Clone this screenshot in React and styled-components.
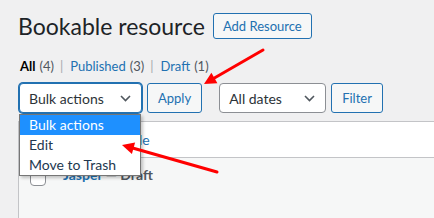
import React from "react";
import styled, { createGlobalStyle, css } from "styled-components";

const Global = createGlobalStyle`
  html, body { margin: 0; padding: 0; background: #f0f0f1; overflow: hidden; }
  body { font-family: Lato, "Noto Sans", sans-serif; color: #3c434a; }
  * { box-sizing: border-box; }
`;

const Page = styled.div`
  position: relative;
  width: 434px;
  height: 218px;
  overflow: hidden;
  padding: 13px 0 0 18px;
`;

const TitleRow = styled.div`
  display: flex;
  align-items: center;
  gap: 8px;
  height: 26px;
`;

const Title = styled.h1`
  margin: 0;
  font-size: 23px;
  font-weight: 400;
  line-height: 26px;
  color: #1d2327;
`;

const baseButton = css`
  background: #f6f7f7;
  border: 1px solid #2271b1;
  border-radius: 3px;
  color: #2271b1;
  font-family: inherit;
  font-size: 13px;
  cursor: pointer;
  display: inline-flex;
  align-items: center;
`;

const AddButton = styled.button`
  ${baseButton};
  height: 26px;
  padding: 0 9px;
`;

const Views = styled.ul`
  display: flex;
  list-style: none;
  margin: 18px 0 0 2px;
  padding: 0;
  font-size: 13px;
  line-height: 18px;
  color: #50575e;
`;

const ViewItem = styled.li`
  display: flex;
  gap: 4px;
  & + &::before {
    content: "|";
    color: #a7aaad;
    margin: 0 3px 0 6px;
  }
`;

const ViewLink = styled.a`
  color: ${(p) => (p.$current ? "#000" : "#2271b1")};
  font-weight: ${(p) => (p.$current ? 700 : 400)};
  text-decoration: none;
`;

const Toolbar = styled.div`
  display: flex;
  align-items: center;
  margin: 8px 0 0 1px;
  height: 30px;
`;

const ActionGroup = styled.div`
  display: flex;
  align-items: center;
  gap: 5px;
  margin-right: ${(p) => p.$gapAfter || 0}px;
`;

const SelectWrap = styled.div`
  position: relative;
`;

const SelectBox = styled.div`
  width: ${(p) => p.$width}px;
  height: 30px;
  display: flex;
  align-items: center;
  justify-content: space-between;
  padding: 0 10px 0 9px;
  background: #fff;
  border: 1px solid ${(p) => (p.$focused ? "#2271b1" : "#8c8f94")};
  box-shadow: ${(p) => (p.$focused ? "0 0 0 1px #2271b1" : "none")};
  border-radius: 4px;
  font-size: 14px;
  color: #2c3338;
`;

const Chevron = styled.svg`
  width: 11px;
  height: 7px;
  flex: none;
`;

const ActionButton = styled.button`
  ${baseButton};
  height: 30px;
  padding: 0 10px;
`;

const Menu = styled.ul`
  position: absolute;
  top: 31px;
  left: 0;
  width: 122px;
  margin: 0;
  padding: 0;
  list-style: none;
  background: #fff;
  border: 1px solid #767676;
  box-shadow: 2px 2px 3px rgba(0, 0, 0, 0.22);
  z-index: 5;
`;

const MenuItem = styled.li`
  height: 20px;
  line-height: 20px;
  padding-left: 9px;
  font-size: 14px;
  background: ${(p) => (p.$active ? "#1e90ff" : "transparent")};
  color: ${(p) => (p.$active ? "#fff" : "#22384f")};
`;

const Table = styled.div`
  margin-top: 8px;
  width: 440px;
  background: #fff;
  border: 1px solid #c3c4c7;
  border-right: none;
`;

const HeadRow = styled.div`
  display: grid;
  grid-template-columns: 36px 1fr;
  height: 36px;
  align-items: center;
  border-bottom: 1px solid #c3c4c7;
`;

const HeadTitle = styled.a`
  padding-left: 8px;
  font-size: 14px;
  color: #2271b1;
  text-decoration: none;
`;

const BodyRow = styled.div`
  display: grid;
  grid-template-columns: 36px 1fr;
  background: #f6f7f7;
  height: 70px;
  align-items: start;
`;

const CheckCell = styled.div`
  padding: ${(p) => p.$top}px 0 0 11px;
`;

const Checkbox = styled.span`
  display: block;
  width: 16px;
  height: 16px;
  border: 1px solid #8c8f94;
  border-radius: 4px;
  background: #fff;
`;

const RowTitle = styled.strong`
  display: block;
  padding: 7px 0 0 8px;
  font-size: 14px;
  line-height: 20px;
  font-weight: 700;
  color: #50575e;
`;

const RowLink = styled.a`
  color: #2271b1;
  text-decoration: none;
`;

const Overlay = styled.svg`
  position: absolute;
  left: 0;
  top: 0;
  width: 434px;
  height: 218px;
  pointer-events: none;
  z-index: 10;
`;

const ChevronIcon = () => (
  <Chevron viewBox="0 0 11 7">
    <polyline points="1,1 5.5,5.5 10,1" fill="none" stroke="#50575e" strokeWidth="1.6" />
  </Chevron>
);

export default function App() {
  return (
    <>
      <Global />
      <Page>
        <TitleRow>
          <Title>Bookable resource</Title>
          <AddButton>Add Resource</AddButton>
        </TitleRow>
        <Views>
          <ViewItem>
            <ViewLink $current>All</ViewLink>
            <span>(4)</span>
          </ViewItem>
          <ViewItem>
            <ViewLink>Published</ViewLink>
            <span>(3)</span>
          </ViewItem>
          <ViewItem>
            <ViewLink>Draft</ViewLink>
            <span>(1)</span>
          </ViewItem>
        </Views>
        <Toolbar>
          <ActionGroup $gapAfter={17}>
            <SelectWrap>
              <SelectBox $width={123} $focused>
                <span>Bulk actions</span>
                <ChevronIcon />
              </SelectBox>
              <Menu>
                <MenuItem $active>Bulk actions</MenuItem>
                <MenuItem>Edit</MenuItem>
                <MenuItem>Move to Trash</MenuItem>
              </Menu>
            </SelectWrap>
            <ActionButton>Apply</ActionButton>
          </ActionGroup>
          <ActionGroup>
            <SelectBox $width={107}>
              <span>All dates</span>
              <ChevronIcon />
            </SelectBox>
            <ActionButton>Filter</ActionButton>
          </ActionGroup>
        </Toolbar>
        <Table>
          <HeadRow>
            <CheckCell $top={0}>
              <Checkbox />
            </CheckCell>
            <HeadTitle>Resource Title</HeadTitle>
          </HeadRow>
          <BodyRow>
            <CheckCell $top={12}>
              <Checkbox />
            </CheckCell>
            <RowTitle>
              <RowLink>Jasper</RowLink> — Draft
            </RowTitle>
          </BodyRow>
        </Table>
        <Overlay viewBox="0 0 434 218">
          <line x1="263" y1="50" x2="214.4" y2="78" stroke="#f00" strokeWidth="3" strokeLinecap="round" />
          <polygon points="204,84 217.4,83.2 211.4,72.8" fill="#f00" />
          <line x1="217" y1="172" x2="133.5" y2="148.3" stroke="#f00" strokeWidth="3" strokeLinecap="round" />
          <polygon points="122,145 135.1,142.5 131.9,154.1" fill="#f00" />
        </Overlay>
      </Page>
    </>
  );
}
